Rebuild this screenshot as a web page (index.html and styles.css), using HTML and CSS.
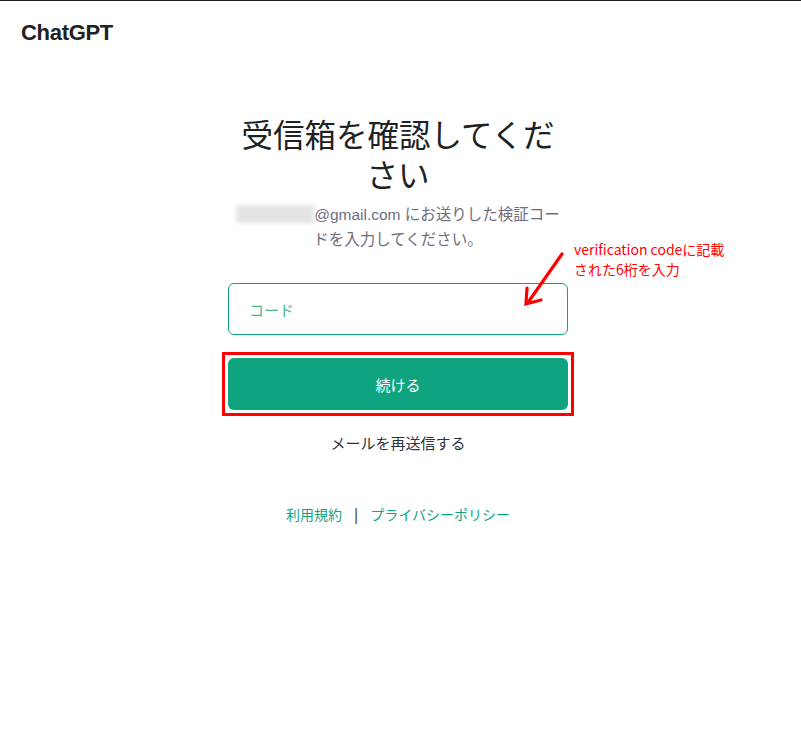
FILE: index.html
```html
<!DOCTYPE html>
<html lang="ja">
<head>
    <meta charset="UTF-8">
    <meta name="viewport" content="width=device-width, initial-scale=1.0">
    <title>ChatGPT - 受信箱を確認してください</title>
    <link rel="stylesheet" href="styles.css">
</head>
<body>
    <header class="top-bar">
        <div class="logo">ChatGPT</div>
    </header>

    <main class="page">
        <section class="verify-box">
            <h1 class="title">受信箱を確認してください</h1>
            <p class="subtitle"><span class="email-blur"></span>@gmail.com にお送りした検証コー<br>ドを入力してください。</p>

            <form class="verify-form">
                <div class="field">
                    <input type="text" class="code-input" placeholder="コード">
                    <div class="note">verification codeに記載<br>された6桁を入力</div>
                    <svg class="note-arrow" width="44" height="58" viewBox="0 0 44 58">
                        <path d="M40 3 L7 50" stroke="#f00" stroke-width="3.2" fill="none" stroke-linecap="round"/>
                        <path d="M5 37 L4 53 L19 49" stroke="#f00" stroke-width="3.2" fill="none" stroke-linecap="round"/>
                    </svg>
                </div>
                <div class="highlight">
                    <button type="submit" class="continue-btn">続ける</button>
                </div>
            </form>

            <a href="#" class="resend">メールを再送信する</a>
        </section>

        <footer class="links">
            <a href="#">利用規約</a>
            <span class="sep">|</span>
            <a href="#">プライバシーポリシー</a>
        </footer>
    </main>
</body>
</html>
```

FILE: styles.css
```css
* {
    margin: 0;
    padding: 0;
    box-sizing: border-box;
}

body {
    font-family: "Liberation Sans", "Noto Sans CJK JP", sans-serif;
    background: #fff;
    color: #2d333a;
    border-top: 1px solid #1f1f1f;
    min-height: 100vh;
}

.top-bar {
    padding: 19px 21px 0;
}

.logo {
    font-size: 22px;
    font-weight: 700;
    color: #202123;
    letter-spacing: -0.3px;
    line-height: 26px;
}

.page {
    display: flex;
    flex-direction: column;
    align-items: center;
    padding-right: 5px;
}

.verify-box {
    width: 340px;
    margin-top: 67px;
    display: flex;
    flex-direction: column;
    align-items: stretch;
    text-align: center;
}

.title {
    font-family: "Noto Sans CJK JP", sans-serif;
    font-size: 31.5px;
    font-weight: 400;
    line-height: 40px;
    color: #202123;
}

.subtitle {
    margin-top: 9px;
    font-size: 15.5px;
    line-height: 25px;
    color: #6e6e80;
}

.email-blur {
    display: inline-block;
    width: 78px;
    height: 18px;
    background: #e4e4e4;
    filter: blur(2px);
    vertical-align: -3px;
}

.verify-form {
    margin-top: 31px;
    display: flex;
    flex-direction: column;
    gap: 17px;
}

.field {
    position: relative;
}

.code-input {
    width: 100%;
    height: 52px;
    padding: 0 20px;
    border: 1px solid #10a37f;
    border-radius: 6px;
    font-family: "Noto Sans CJK JP", sans-serif;
    font-size: 15px;
    color: #2d333a;
    outline: none;
}

.code-input::placeholder {
    color: #4bb596;
}

.note {
    position: absolute;
    left: 346px;
    top: -44px;
    text-align: left;
    font-family: "Noto Sans CJK JP", sans-serif;
    font-size: 14px;
    line-height: 20px;
    color: #f00;
    white-space: nowrap;
}

.note-arrow {
    position: absolute;
    left: 294px;
    top: -32px;
}

.highlight {
    margin: 0 -6px;
    border: 3.5px solid #f00;
    padding: 3px;
    display: flex;
}

.continue-btn {
    flex: 1;
    height: 52px;
    border: none;
    border-radius: 6px;
    background: #10a37f;
    color: #fff;
    font-family: "Noto Sans CJK JP", sans-serif;
    font-size: 15px;
    cursor: pointer;
}

.resend {
    margin-top: 15px;
    font-family: "Noto Sans CJK JP", sans-serif;
    font-size: 15px;
    line-height: 24px;
    color: #2d333a;
    text-decoration: none;
}

.links {
    margin-top: 49px;
    display: flex;
    align-items: center;
    gap: 12px;
    font-family: "Noto Sans CJK JP", sans-serif;
    font-size: 14px;
    line-height: 20px;
}

.links a {
    color: #10a37f;
    text-decoration: none;
}

.sep {
    color: #555;
    font-weight: 700;
}
```
